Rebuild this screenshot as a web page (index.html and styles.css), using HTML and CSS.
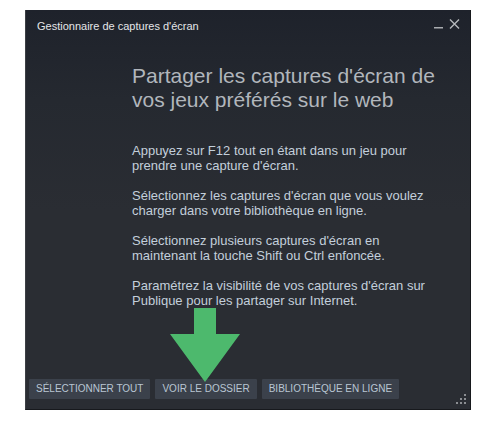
FILE: index.html
```html
<!DOCTYPE html>
<html lang="fr">
<head>
<meta charset="utf-8">
<title>Gestionnaire de captures d'écran</title>
<link rel="stylesheet" href="styles.css">
</head>
<body>
<div class="window">
  <div class="titlebar">
    <span class="title">Gestionnaire de captures d'écran</span>
    <div class="controls">
      <svg class="ctl-min" width="9" height="10" viewBox="0 0 9 10"><rect x="0" y="8" width="9" height="1.5" fill="#a9acb0"/></svg>
      <svg class="ctl-close" width="11" height="10" viewBox="0 0 11 10"><path d="M1 0.5 L10 9.5 M10 0.5 L1 9.5" stroke="#b5b8bc" stroke-width="1.4"/></svg>
    </div>
  </div>
  <div class="content">
    <h1 class="heading">Partager les captures d'écran de vos jeux préférés sur le web</h1>
    <p class="para">Appuyez sur F12 tout en étant dans un jeu pour prendre une capture d'écran.</p>
    <p class="para">Sélectionnez les captures d'écran que vous voulez charger dans votre bibliothèque en ligne.</p>
    <p class="para">Sélectionnez plusieurs captures d'écran en maintenant la touche Shift ou Ctrl enfoncée.</p>
    <p class="para">Paramétrez la visibilité de vos captures d'écran sur Publique pour les partager sur Internet.</p>
  </div>
  <div class="buttons">
    <button class="btn">Sélectionner tout</button>
    <button class="btn">Voir le dossier</button>
    <button class="btn">Bibliothèque en ligne</button>
  </div>
  <svg class="grip" width="12" height="12" viewBox="0 0 12 12">
    <rect x="9" y="1" width="2" height="2" fill="#8b8e92"/>
    <rect x="5" y="5" width="2" height="2" fill="#8b8e92"/>
    <rect x="9" y="5" width="2" height="2" fill="#8b8e92"/>
    <rect x="1" y="9" width="2" height="2" fill="#8b8e92"/>
    <rect x="5" y="9" width="2" height="2" fill="#8b8e92"/>
    <rect x="9" y="9" width="2" height="2" fill="#8b8e92"/>
  </svg>
  <svg class="arrow" width="70" height="74" viewBox="0 0 70 74">
    <polygon points="24,0 46,0 46,26 70,26 35,74 0,26 24,26" fill="#4db96d"/>
  </svg>
</div>
</body>
</html>
```

FILE: styles.css
```css
html, body {
  margin: 0;
  padding: 0;
  background: #ffffff;
}
body {
  font-family: "Liberation Sans", Arial, sans-serif;
}
.window {
  position: relative;
  margin: 10px 0 0 25px;
  width: 446px;
  height: 400px;
  box-sizing: border-box;
  display: flex;
  flex-direction: column;
  background: linear-gradient(180deg, #1e222b 0px, #252930 90px, #2a2d33 200px, #2a2d33 100%);
  border-left: 1px solid #3c3f44;
  border-right: 1px solid #17191d;
  border-bottom: 1px solid #17191d;
}
.titlebar {
  height: 31px;
  flex: none;
  display: flex;
  align-items: center;
  justify-content: space-between;
  padding: 0 10px 0 11px;
}
.title {
  font-size: 11px;
  color: #e4e6e8;
}
.controls {
  display: flex;
  align-items: flex-end;
  gap: 6px;
  margin-top: -3px;
}
.content {
  flex: 1;
  padding: 0 30px 0 106px;
}
.heading {
  margin: 23px 0 31px;
  font-weight: normal;
  font-size: 21px;
  line-height: 24px;
  color: #b1b6bc;
}
.para {
  margin: 0 0 15px;
  font-size: 13px;
  line-height: 15px;
  color: #c3cfdb;
}
.buttons {
  flex: none;
  display: flex;
  gap: 5px;
  padding: 0 0 10px 3px;
}
.btn {
  height: 20px;
  padding: 0 7px;
  border: none;
  border-radius: 1px;
  background: #3b414b;
  color: #b9c6d3;
  font-family: "Liberation Sans", Arial, sans-serif;
  font-size: 10px;
  text-transform: uppercase;
  line-height: 20px;
}
.grip {
  position: absolute;
  right: 3px;
  bottom: 4px;
}
.arrow {
  position: absolute;
  left: 144px;
  top: 298px;
}
```
